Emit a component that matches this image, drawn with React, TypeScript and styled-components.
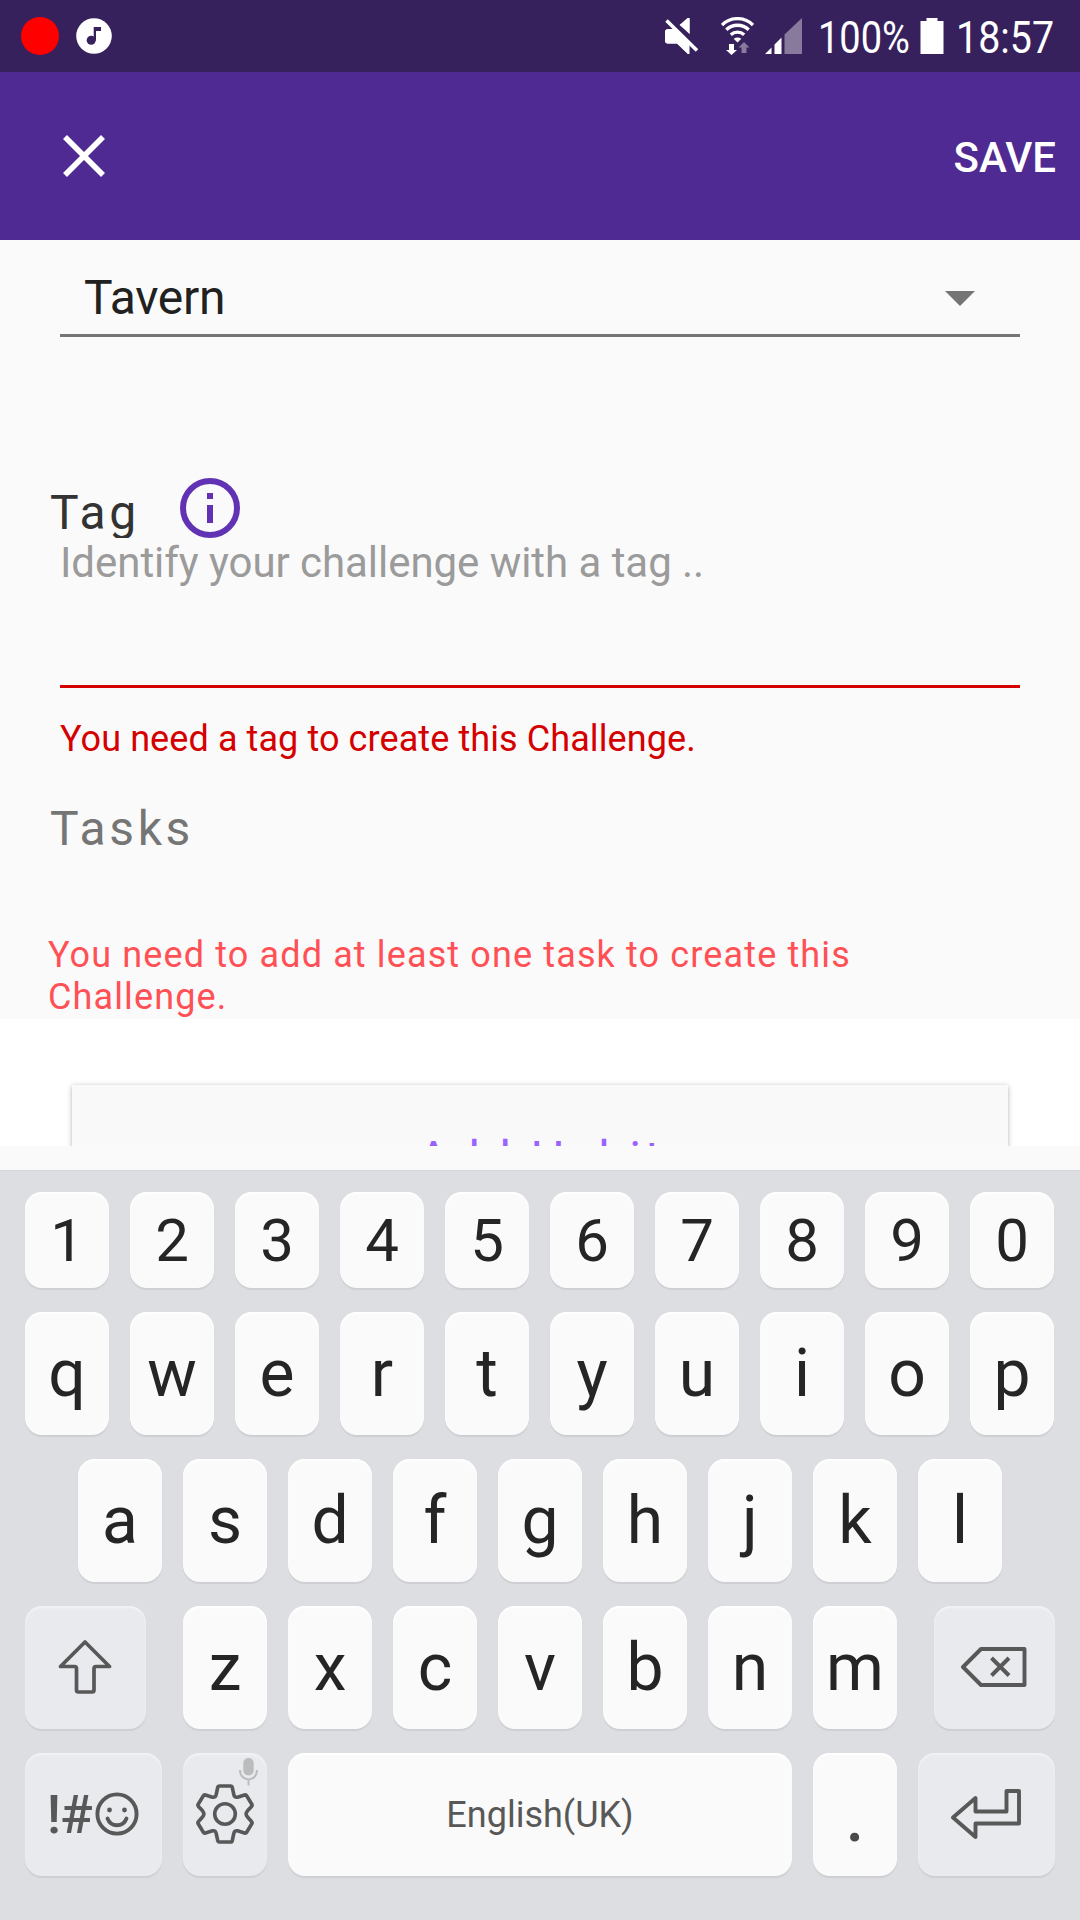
import React from "react";
import styled, { createGlobalStyle } from "styled-components";

const GlobalStyle = createGlobalStyle`
  * { box-sizing: border-box; }
  html, body { margin: 0; padding: 0; background: #fafafa; }
  body { font-family: Roboto, "Liberation Sans", sans-serif; }
  svg { display: block; flex: none; }
`;

const Screen = styled.div`
  width: 1080px;
  height: 1920px;
  display: flex;
  flex-direction: column;
  overflow: hidden;
  background: #fafafa;
`;

const StatusBar = styled.div`
  height: 72px;
  flex: none;
  display: flex;
  justify-content: space-between;
  background: #37215c;
  color: #fff;
`;

const StatusGroup = styled.div`
  display: flex;
  align-items: center;
`;

const StatusIcons = styled(StatusGroup)`
  svg:nth-child(1) { margin-right: 22px; }
  svg:nth-child(2) { margin-right: 11px; }
  svg:nth-child(5) { margin-left: 13px; }
`;

const StatusText = styled.span<{ $width: number; $gap: number; $condense: number }>`
  width: ${(p) => p.$width}px;
  margin-left: ${(p) => p.$gap}px;
  font-size: 45px;
  line-height: 72px;
  white-space: nowrap;
  transform: translateY(2px) scaleX(${(p) => p.$condense});
  transform-origin: 0 50%;
`;

const RecordDot = styled.span`
  width: 38px;
  height: 38px;
  margin: 0 17px 0 21px;
  border-radius: 50%;
  background: #f00;
`;

const Toolbar = styled.header`
  height: 168px;
  flex: none;
  display: flex;
  align-items: center;
  justify-content: space-between;
  padding: 0 24px 0 63px;
  background: #4f2a93;
`;

const SaveButton = styled.button`
  border: 0;
  padding: 4px 0 0;
  background: none;
  color: #fff;
  font: 500 42px/50px Roboto, "Liberation Sans", sans-serif;
`;

const Form = styled.main`
  height: 779px;
  flex: none;
  display: flex;
  flex-direction: column;
`;

const Spinner = styled.div`
  height: 97px;
  margin: 0 60px;
  padding: 30px 45px 0 24px;
  display: flex;
  justify-content: space-between;
  align-items: flex-start;
  border-bottom: 3px solid #757575;
  color: #212121;
  font-size: 48px;
  line-height: 56px;
  letter-spacing: -0.3px;

  svg { margin-top: 21px; }
`;

const TagHeader = styled.div`
  height: 60px;
  margin: 141px 0 0 50px;
  display: flex;
  overflow: hidden;
`;

const Label = styled.div<{ $color: string }>`
  color: ${(p) => p.$color};
  font-size: 48px;
  line-height: 56px;
  letter-spacing: 3.6px;
`;

const TagLabel = styled(Label)`
  width: 130px;
  padding-top: 7px;
`;

const TagField = styled.div`
  height: 150px;
  margin: 0 60px;
  border-bottom: 3px solid #d50000;
  color: #9b9b9b;
  font-size: 42px;
  line-height: 50px;
  letter-spacing: -0.05px;
`;

const FieldError = styled.div`
  margin: 30px 60px 0;
  color: #d50000;
  font-size: 36px;
  line-height: 42px;
  letter-spacing: 0.09px;
`;

const TasksLabel = styled(Label)`
  margin: 41px 50px 0;
`;

const TasksError = styled.div`
  margin: auto 200px 1px 48px;
  color: #ff5055;
  font-size: 36px;
  line-height: 42px;
  letter-spacing: 1.13px;
`;

const TaskArea = styled.section`
  height: 127px;
  flex: none;
  padding: 66px 72px 0;
  margin-bottom: 24px;
  overflow: hidden;
  background: #fff;
`;

const AddButton = styled.button`
  width: 100%;
  height: 144px;
  display: block;
  padding: 3px 0 0 2px;
  border: 0;
  background: #f9f9f9;
  box-shadow: 0 1px 5px rgba(0, 0, 0, 0.3);
  color: #9a62ff;
  font: 400 48px/56px Roboto, "Liberation Sans", sans-serif;
  letter-spacing: 3.84px;
`;

const Keyboard = styled.div`
  flex: 1;
  display: flex;
  flex-direction: column;
  gap: 24px;
  padding: 21px 25px 0;
  border-top: 1px solid #d6d7da;
  background: #dddee2;
`;

const KeyRow = styled.div<{ $indent?: number }>`
  display: flex;
  gap: 21px;
  padding-left: ${(p) => p.$indent ?? 0}px;
`;

const Key = styled.div<{ $w?: number; $fn?: boolean; $short?: boolean }>`
  width: ${(p) => p.$w ?? 84}px;
  height: ${(p) => (p.$short ? 96 : 123)}px;
  flex: none;
  position: relative;
  display: flex;
  align-items: center;
  justify-content: center;
  padding: ${(p) => (p.$fn ? "0 1px 1px 0" : p.$short ? "2px 0 0" : "1px 0 0")};
  border-radius: 17px;
  background: ${(p) => (p.$fn ? "#e9eaee" : "#fafafa")};
  box-shadow: 0 2px 1px #cecfd3, inset 0 2px 2px ${(p) => (p.$fn ? "#f2f3f5" : "#fff")};
  color: #252525;
  font-size: ${(p) => (p.$short ? 60 : 66)}px;
  line-height: 76px;
`;

const ShiftKey = styled(Key)`
  margin-right: 16px;
`;

const BackspaceKey = styled(Key)`
  margin-left: 16px;
`;

const SpaceLabel = styled.span`
  color: #585858;
  font-size: 36px;
  line-height: 42px;
`;

const SymbolLabel = styled.span`
  color: #585858;
  font-size: 54px;
  font-weight: 500;
  line-height: 60px;
  letter-spacing: -0.8px;
  margin-right: 3px;
  padding-top: 1px;
`;

const MicBadge = styled.span`
  position: absolute;
  top: 5px;
  right: 9px;
`;

const PeriodLabel = styled.span`
  color: #4a4a4a;
  font-weight: 500;
  padding-top: 7px;
`;

const MusicIcon = () => (
  <svg width="36" height="36" viewBox="0 0 36 36">
    <circle cx="18" cy="18" r="17.8" fill="#fff" />
    <circle cx="15.2" cy="22.3" r="4.5" fill="#37215c" />
    <path d="M17.7 9H25v4h-5v9.5h-2.3z" fill="#37215c" />
  </svg>
);

const MuteIcon = () => (
  <svg width="34" height="38" viewBox="0 0 34 38">
    <path d="M2 12H9.500L24.500 1V37H23L12 26.500H2L0 25V14z" fill="#fff" />
    <path d="M-1 -4H12.500L15 7.500L35 27.500V31L31 33L0 3z" fill="#37215c" />
    <path d="M14.500 8L22.500 1H24.500V16.500z" fill="#fff" />
    <path d="M1.500 3.500L32 33.500" stroke="#fff" strokeWidth="3.600" />
    <path d="M0 14L2 12H8L23 27V37L12 26.500H2L0 25z" fill="#fff" />
  </svg>
);

const WifiIcon = () => (
  <svg width="33" height="38" viewBox="0 0 33 38">
    <g fill="none" stroke="#fff" strokeWidth="3.300">
      <path d="M1 8A22 22 0 0 1 32 8" />
      <path d="M5.300 12.800A16 16 0 0 1 27.700 12.800" />
      <path d="M9.800 17.700A10 10 0 0 1 23.200 17.700" />
    </g>
    <path d="M12.700 21.800Q16.500 19 20.300 21.800L16.500 25.500z" fill="#fff" />
    <path d="M8 27h5v6h3l-5.500 5L5 33h3z" fill="#fff" />
    <path d="M20.500 36h5v-5.500H28.500l-5.500-5.500-5.500 5.500h3z" fill="#877a9d" />
  </svg>
);

const SignalIcon = () => (
  <svg width="37" height="36" viewBox="0 0 37 36">
    <path d="M0 36L6.500 29.500V36zM9.500 26.500L16.500 19.500V36h-7z" fill="#fff" />
    <path d="M19.500 16.500L37 0V36H19.500z" fill="#877a9d" />
  </svg>
);

const BatteryIcon = () => (
  <svg width="24" height="36" viewBox="0 0 24 36">
    <path d="M6.500 0h11v3H23.500v33H0.500V3h6z" fill="#fff" />
  </svg>
);

const CloseIcon = () => (
  <svg width="42" height="42" viewBox="0 0 42 42">
    <path d="M2 2L40 40M40 2L2 40" stroke="#fff" strokeWidth="5.600" />
  </svg>
);

const DropdownIcon = () => (
  <svg width="30" height="15" viewBox="0 0 30 15">
    <path d="M0 0h30L15 15z" fill="#757575" />
  </svg>
);

const InfoIcon = () => (
  <svg width="60" height="60" viewBox="0 0 60 60">
    <circle cx="30" cy="30" r="27" fill="none" stroke="#6133b4" strokeWidth="6" />
    <path d="M27 15h6v6h-6zM27 27h6v18h-6z" fill="#6133b4" />
  </svg>
);

const keyStroke = {
  fill: "none",
  stroke: "#585858",
  strokeLinejoin: "round" as const,
  strokeLinecap: "round" as const,
};

const ShiftIcon = () => (
  <svg width="54" height="54" viewBox="0 0 54 54">
    <path d="M27 2L51.500 26.500H38q-2 0-2 2V50q0 2-2 2H20.500q-2 0-2-2V28.500q0-2-2-2H2.500z" {...keyStroke} strokeWidth="3.700" />
  </svg>
);

const BackspaceIcon = () => (
  <svg width="66" height="40" viewBox="0 0 66 40">
    <path d="M20 2H63.500V38H20L2 20z" {...keyStroke} strokeWidth="3.900" />
    <path d="M30.500 11L48 28.500M48 11L30.500 28.500" {...keyStroke} strokeLinecap="butt" strokeWidth="3.900" />
  </svg>
);

const EnterIcon = () => (
  <svg width="70" height="50" viewBox="0 0 70 50">
    <path d="M55.500 2H68V34.500H24.500V48L2 28.500 24.500 9V22.500H55.500z" {...keyStroke} strokeWidth="3.900" />
  </svg>
);

const SmileyIcon = () => (
  <svg width="44" height="44" viewBox="0 0 44 44">
    <circle cx="22" cy="22" r="19.600" {...keyStroke} strokeWidth="3.900" />
    <circle cx="14.500" cy="18" r="2.400" fill="#585858" />
    <circle cx="29.500" cy="18" r="2.400" fill="#585858" />
    <path d="M12.500 26.500C16 35.500 28 35.500 31.500 26.500" {...keyStroke} strokeWidth="3.800" />
  </svg>
);

const GearIcon = () => (
  <svg width="58" height="60" viewBox="0 0 58 60">
    <path
      d="M23.500 2H34.500Q36 2 36.300 3.500L37.800 10.500Q38.300 13.800 41.500 13.200L48.500 11Q50 10.600 50.800 12L55.800 20.200Q56.500 21.500 55.500 22.500L51.500 26.800Q48.800 30 51.500 33L55.500 37.500Q56.500 38.500 55.800 39.800L50.800 48Q50 49.400 48.500 49L41.500 46.800Q38.300 46.200 37.800 49.500L36.300 56.500Q36 58 34.500 58H23.500Q22 58 21.700 56.500L20.200 49.500Q19.700 46.200 16.500 46.800L9.500 49Q8 49.400 7.200 48L2.200 39.800Q1.500 38.500 2.500 37.500L6.500 33Q9.200 30 6.500 26.800L2.500 22.500Q1.500 21.500 2.200 20.200L7.200 12Q8 10.600 9.500 11L16.500 13.200Q19.700 13.800 20.200 10.500L21.700 3.500Q22 2 23.500 2z"
      {...keyStroke}
      strokeWidth="3.600"
    />
    <circle cx="29" cy="30" r="10.300" {...keyStroke} strokeWidth="3.600" />
  </svg>
);

const MicIcon = () => (
  <svg width="19" height="28" viewBox="0 0 19 28">
    <rect x="4.300" y="0" width="10.400" height="17.500" rx="5" fill="#bbbcbe" />
    <path d="M1 12C1 24.500 18 24.500 18 12M9.500 21.500V27.500" fill="none" stroke="#bbbcbe" strokeWidth="2" />
  </svg>
);

const App = () => (
  <>
    <GlobalStyle />
    <Screen>
      <StatusBar>
        <StatusGroup>
          <RecordDot />
          <MusicIcon />
        </StatusGroup>
        <StatusIcons>
          <MuteIcon />
          <WifiIcon />
          <SignalIcon />
          <StatusText $width={89} $gap={16} $condense={0.845}>100%</StatusText>
          <BatteryIcon />
          <StatusText $width={124} $gap={12} $condense={0.875}>18:57</StatusText>
        </StatusIcons>
      </StatusBar>
      <Toolbar>
        <CloseIcon />
        <SaveButton>SAVE</SaveButton>
      </Toolbar>
      <Form>
        <Spinner>
          Tavern
          <DropdownIcon />
        </Spinner>
        <TagHeader>
          <TagLabel $color="#333">Tag</TagLabel>
          <InfoIcon />
        </TagHeader>
        <TagField>Identify your challenge with a tag ..</TagField>
        <FieldError>You need a tag to create this Challenge.</FieldError>
        <TasksLabel $color="#757575">Tasks</TasksLabel>
        <TasksError>You need to add at least one task to create this Challenge.</TasksError>
      </Form>
      <TaskArea>
        <AddButton>Add Habit</AddButton>
      </TaskArea>
      <Keyboard>
        <KeyRow>
          {[..."1234567890"].map((k) => (
            <Key key={k} $short>{k}</Key>
          ))}
        </KeyRow>
        <KeyRow>
          {[..."qwertyuiop"].map((k) => (
            <Key key={k}>{k}</Key>
          ))}
        </KeyRow>
        <KeyRow $indent={53}>
          {[..."asdfghjkl"].map((k) => (
            <Key key={k}>{k}</Key>
          ))}
        </KeyRow>
        <KeyRow>
          <ShiftKey $w={121} $fn><ShiftIcon /></ShiftKey>
          {[..."zxcvbnm"].map((k) => (
            <Key key={k}>{k}</Key>
          ))}
          <BackspaceKey $w={121} $fn><BackspaceIcon /></BackspaceKey>
        </KeyRow>
        <KeyRow>
          <Key $w={137} $fn>
            <SymbolLabel>!#</SymbolLabel>
            <SmileyIcon />
          </Key>
          <Key $fn>
            <GearIcon />
            <MicBadge><MicIcon /></MicBadge>
          </Key>
          <Key $w={504}><SpaceLabel>English(UK)</SpaceLabel></Key>
          <Key><PeriodLabel>.</PeriodLabel></Key>
          <Key $w={137} $fn><EnterIcon /></Key>
        </KeyRow>
      </Keyboard>
    </Screen>
  </>
);

export default App;
